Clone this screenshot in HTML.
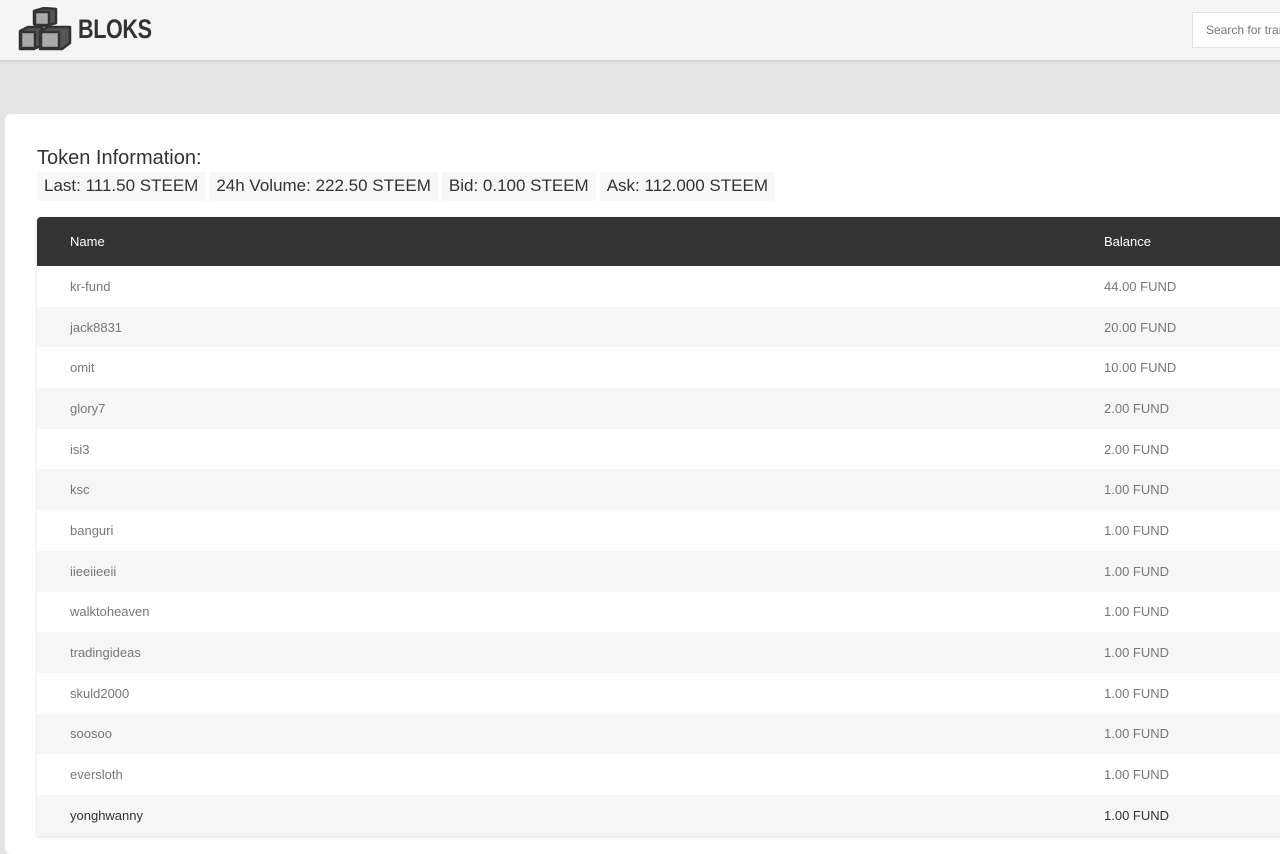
<!DOCTYPE html>
<html><head><meta charset="utf-8"><style>
*{margin:0;padding:0;box-sizing:border-box}
body{width:1280px;height:846px;overflow:hidden;background:#e4e4e4;font-family:"Liberation Sans",sans-serif}
.hdr{position:absolute;left:0;top:0;width:1280px;height:60px;background:#f5f5f5;box-shadow:0 1px 3px rgba(0,0,0,.12)}
.logo{position:absolute;left:18px;top:7px}
.brand{position:absolute;left:78px;top:14px;font-size:27px;font-weight:bold;color:#333;letter-spacing:-0.5px;transform:scaleX(.8);transform-origin:left}
.search{position:absolute;left:1192px;top:12px;width:100px;height:36px;background:#fff;border:1px solid #e2e2e2;font-size:12px;color:#777;padding:10px 13px;white-space:nowrap;overflow:hidden}
.card{position:absolute;left:5px;top:114px;width:1290px;height:740px;background:#fff;border-radius:6px}
.ti{position:absolute;left:37px;top:147px;font-size:20px;color:#333}
.stats{position:absolute;left:37px;top:172px;display:flex;gap:4px}
.stats span{background:#f7f7f7;padding:4px 7px 3px;font-size:17px;color:#333;height:29px}
table{position:absolute;left:37px;top:217px;width:1260px;border-collapse:collapse;font-size:13px;box-shadow:0 1px 3px rgba(0,0,0,.15)}
th{background:#333;color:#fff;font-weight:normal;height:49px;text-align:left;font-size:13px}
th:first-child{border-radius:4px 0 0 0}
td{height:40.7px;color:#777}
td:first-child,th:first-child{padding-left:33px}
td:last-child,th:last-child{width:193px}
tr:nth-child(odd) td{background:#f6f6f6}
tr:last-child td{color:#333}
</style></head><body>
<div class="hdr">
<svg class="logo" width="56" height="46" viewBox="0 0 56 46">
<g stroke="#333" stroke-width="2.5" stroke-linejoin="round">
<path d="M16 4 L26 1 L38 2 L38 16 L28 19 L16 17 Z" fill="#555"/>
<rect x="17" y="5" width="14" height="13" fill="#aaa"/>
<path d="M2 24 L10 20 L24 20 L24 38 L16 42 L2 42 Z" fill="#555"/>
<rect x="3" y="25" width="14" height="16" fill="#aaa"/>
<path d="M22 24 L30 20 L52 20 L52 36 L44 42 L22 42 Z" fill="#555"/>
<rect x="23" y="25" width="18" height="16" fill="#aaa"/>
</g></svg>
<div class="brand">BLOKS</div>
<div class="search">Search for transactions</div>
</div>
<div class="card"></div>
<div class="ti">Token Information:</div>
<div class="stats"><span>Last: 111.50 STEEM</span><span>24h Volume: 222.50 STEEM</span><span>Bid: 0.100 STEEM</span><span>Ask: 112.000 STEEM</span></div>
<table>
<tr><th>Name</th><th>Balance</th></tr>
<tr><td>kr-fund</td><td>44.00 FUND</td></tr>
<tr><td>jack8831</td><td>20.00 FUND</td></tr>
<tr><td>omit</td><td>10.00 FUND</td></tr>
<tr><td>glory7</td><td>2.00 FUND</td></tr>
<tr><td>isi3</td><td>2.00 FUND</td></tr>
<tr><td>ksc</td><td>1.00 FUND</td></tr>
<tr><td>banguri</td><td>1.00 FUND</td></tr>
<tr><td>iieeiieeii</td><td>1.00 FUND</td></tr>
<tr><td>walktoheaven</td><td>1.00 FUND</td></tr>
<tr><td>tradingideas</td><td>1.00 FUND</td></tr>
<tr><td>skuld2000</td><td>1.00 FUND</td></tr>
<tr><td>soosoo</td><td>1.00 FUND</td></tr>
<tr><td>eversloth</td><td>1.00 FUND</td></tr>
<tr><td>yonghwanny</td><td>1.00 FUND</td></tr>
</table>
</body></html>
